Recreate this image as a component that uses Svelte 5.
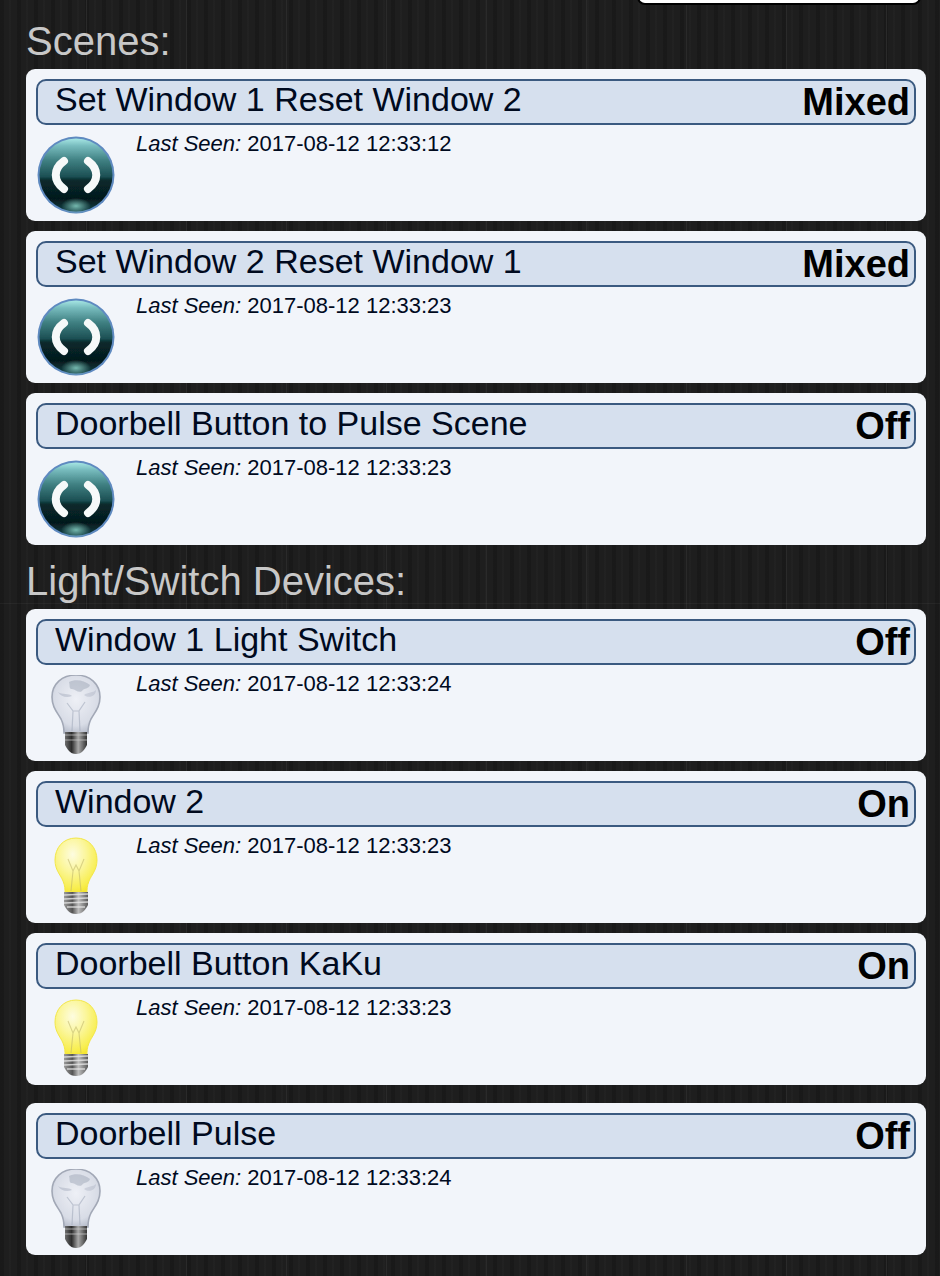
<script>
  const scenes = [
    { name: 'Set Window 1 Reset Window 2', status: 'Mixed', seen: '2017-08-12 12:33:12', icon: 'scene' },
    { name: 'Set Window 2 Reset Window 1', status: 'Mixed', seen: '2017-08-12 12:33:23', icon: 'scene' },
    { name: 'Doorbell Button to Pulse Scene', status: 'Off', seen: '2017-08-12 12:33:23', icon: 'scene' }
  ];
  const devices = [
    { name: 'Window 1 Light Switch', status: 'Off', seen: '2017-08-12 12:33:24', icon: 'off' },
    { name: 'Window 2', status: 'On', seen: '2017-08-12 12:33:23', icon: 'on' },
    { name: 'Doorbell Button KaKu', status: 'On', seen: '2017-08-12 12:33:23', icon: 'on' },
    { name: 'Doorbell Pulse', status: 'Off', seen: '2017-08-12 12:33:24', icon: 'off', spaced: true }
  ];
</script>

{#snippet icon(kind)}
  {#if kind === 'scene'}
    <svg class="ico" viewBox="0 0 80 80" width="80" height="80" aria-hidden="true">
      <g filter="url(#soft)">
        <circle cx="40" cy="40" r="38.5" fill="#5f8ac0" />
        <circle cx="40" cy="40" r="36.5" fill="url(#sphere)" />
        <ellipse cx="40" cy="71" rx="15" ry="8" fill="url(#glow)" />
        <path d="M28 26 C17 34 17 46 28 54" fill="none" stroke="#f6f9f9" stroke-width="8" stroke-linecap="round" />
        <path d="M52 26 C63 34 63 46 52 54" fill="none" stroke="#f6f9f9" stroke-width="8" stroke-linecap="round" />
      </g>
    </svg>
  {:else if kind === 'on'}
    <svg class="ico" viewBox="0 0 80 80" width="80" height="80" aria-hidden="true">
      <g filter="url(#soft)">
        <path d="M40 1 C27 1 19 11 19 23 C19 33 24 37 27 44 C29 49 29 52 29 56 L51 56 C51 52 51 49 53 44 C56 37 61 33 61 23 C61 11 53 1 40 1 Z"
          fill="url(#bulbOn)" stroke="#f2e64a" stroke-width="1" />
        <path d="M35 54 L37 34 L32 22 M45 54 L43 34 L48 22 M37 34 L40 28 L43 34" fill="none" stroke="#bdb46a" stroke-width="1.1" opacity=".55" />
        <path d="M28 55 L52 55 L52 68 C50 72 47 77 40 77 C33 77 30 72 28 68 Z" fill="url(#base)" />
        <path d="M28 58 L52 57 M28 62 L52 61 M28 66 L52 65 M31 70 L49 70" stroke="#e6e6e6" stroke-width="1.3" opacity=".8" />
      </g>
    </svg>
  {:else}
    <svg class="ico" viewBox="0 0 80 80" width="80" height="80" aria-hidden="true">
      <g filter="url(#soft)">
        <path d="M40 0 C26 0 16 9 16 22 C16 32 21 37 25 44 C28 50 28 54 28 58 L52 58 C52 54 52 50 55 44 C59 37 64 32 64 22 C64 9 54 0 40 0 Z"
          fill="url(#bulbOff)" stroke="#a2a8b6" stroke-width="1.6" />
        <path d="M33 7 C39 4 48 5 54 10 C53 14 48 13 46 16 C42 19 39 13 35 14 C33 13 34 10 33 7 Z" fill="#8f98ab" opacity=".4" />
        <path d="M22 17 C26 20 33 18 36 21 C31 23 25 22 22 17 Z" fill="#8f98ab" opacity=".35" />
        <path d="M48 20 C52 17 57 18 60 15 C60 21 53 24 48 20 Z" fill="#98a0b2" opacity=".3" />
        <path d="M36 56 L37 36 L31 28 M44 56 L43 36 L49 27 M37 36 L43 36" fill="none" stroke="#a4acbd" stroke-width="1.2" opacity=".6" />
        <path d="M29 57 L51 57 L51 70 C49 74 46 79 40 79 C34 79 31 74 29 70 Z" fill="url(#baseDark)" />
        <path d="M29 60 L51 60 M29 65 L51 65" stroke="#cfcfcf" stroke-width="1.2" opacity=".7" />
      </g>
    </svg>
  {/if}
{/snippet}

{#snippet card(item)}
  <article class="card" class:spaced={item.spaced}>
    <header class="bar">
      <span class="name">{item.name}</span>
      <span class="status">{item.status}</span>
    </header>
    <div class="body">
      <div class="pic">{@render icon(item.icon)}</div>
      <p class="seen"><em>Last Seen:</em> {item.seen}</p>
    </div>
  </article>
{/snippet}

<svg class="defs" width="0" height="0" aria-hidden="true">
  <defs>
    <filter id="soft" x="-5%" y="-5%" width="110%" height="110%">
      <feGaussianBlur stdDeviation=".45" />
    </filter>
    <linearGradient id="sphere" x1="0" y1="0" x2="0" y2="1">
      <stop offset="0" stop-color="#a6e6e4" />
      <stop offset=".1" stop-color="#78bcbe" />
      <stop offset=".3" stop-color="#3f8082" />
      <stop offset=".52" stop-color="#1c5054" />
      <stop offset=".57" stop-color="#082a2d" />
      <stop offset=".82" stop-color="#05191c" />
      <stop offset="1" stop-color="#123f44" />
    </linearGradient>
    <radialGradient id="glow">
      <stop offset="0" stop-color="#74b8ae" />
      <stop offset="1" stop-color="#74b8ae" stop-opacity="0" />
    </radialGradient>
    <radialGradient id="bulbOn" cx=".42" cy=".3" r=".72">
      <stop offset="0" stop-color="#fdfce0" />
      <stop offset=".45" stop-color="#fbf69a" />
      <stop offset=".85" stop-color="#f8ee50" />
      <stop offset="1" stop-color="#f5e630" />
    </radialGradient>
    <radialGradient id="bulbOff" cx=".5" cy=".42" r=".65">
      <stop offset="0" stop-color="#eef0f6" />
      <stop offset=".7" stop-color="#d8dce6" />
      <stop offset="1" stop-color="#aeb4c3" />
    </radialGradient>
    <linearGradient id="base" x1="0" y1="0" x2="1" y2="0">
      <stop offset="0" stop-color="#9a9a9a" />
      <stop offset=".35" stop-color="#555" />
      <stop offset=".6" stop-color="#bdbdbd" />
      <stop offset="1" stop-color="#5a5a5a" />
    </linearGradient>
    <linearGradient id="baseDark" x1="0" y1="0" x2="1" y2="0">
      <stop offset="0" stop-color="#6e6e6e" />
      <stop offset=".3" stop-color="#2c2c2c" />
      <stop offset=".6" stop-color="#a8a8a8" />
      <stop offset="1" stop-color="#333" />
    </linearGradient>
  </defs>
</svg>

<main class="page">
  <div class="topbox"></div>
  <h2 class="first">Scenes:</h2>
  <section class="list">
    {#each scenes as s}{@render card(s)}{/each}
  </section>
  <h2>Light/Switch Devices:</h2>
  <section class="list">
    {#each devices as d}{@render card(d)}{/each}
  </section>
</main>

<style>
  :global(body) {
    margin: 0;
    background-color: #1e1e1e;
    background-image:
      linear-gradient(to bottom, transparent 603px, rgba(255, 255, 255, .04) 603px, rgba(255, 255, 255, .04) 604px, transparent 604px),
      repeating-linear-gradient(to right, transparent 0 86px, #2a2a2a 86px 87px, transparent 87px 100px),
      repeating-linear-gradient(to right, rgba(0, 0, 0, .16) 0 4px, transparent 4px 9px, rgba(255, 255, 255, .015) 9px 11px, transparent 11px 17px);
    font-family: "Liberation Sans", Arial, sans-serif;
    color: #000;
  }
  .defs {
    position: absolute;
  }
  .page {
    position: relative;
    width: 940px;
    height: 1276px;
    padding: 0 14px 0 26px;
    box-sizing: border-box;
    overflow: hidden;
  }
  .topbox {
    position: absolute;
    top: -11px;
    left: 637px;
    width: 280px;
    height: 12px;
    background: #fff;
    border: 2px solid #000;
    border-radius: 8px;
  }
  h2 {
    margin: 0;
    font-weight: 400;
    font-size: 40px;
    line-height: 64px;
    height: 64px;
    color: #c8c8c8;
    padding-top: 4px;
    box-sizing: border-box;
  }
  h2.first {
    height: 69px;
    padding-top: 9px;
    line-height: 64px;
  }
  .list {
    display: flex;
    flex-direction: column;
    gap: 10px;
  }
  .card {
    height: 152px;
    box-sizing: border-box;
    padding: 10px;
    background: #f2f5fa;
    border-radius: 9px;
  }
  .card.spaced {
    margin-top: 8px;
  }
  .bar {
    display: flex;
    align-items: center;
    justify-content: space-between;
    height: 46px;
    box-sizing: border-box;
    padding: 0 4px 0 17px;
    background: #d6e0ee;
    border: 2px solid #3b5a80;
    border-radius: 10px;
    color: #000a1e;
  }
  .name {
    font-size: 34px;
    margin-top: -6px;
  }
  .status {
    font-size: 38px;
    font-weight: 700;
    color: #000;
  }
  .body {
    display: flex;
    gap: 20px;
    margin-top: 6px;
  }
  .pic {
    width: 80px;
    height: 80px;
    flex: none;
    margin-top: 4px;
  }
  .ico {
    display: block;
  }
  .seen {
    margin: 0;
    font-size: 22px;
    line-height: 26px;
    color: #000a1e;
  }
</style>
